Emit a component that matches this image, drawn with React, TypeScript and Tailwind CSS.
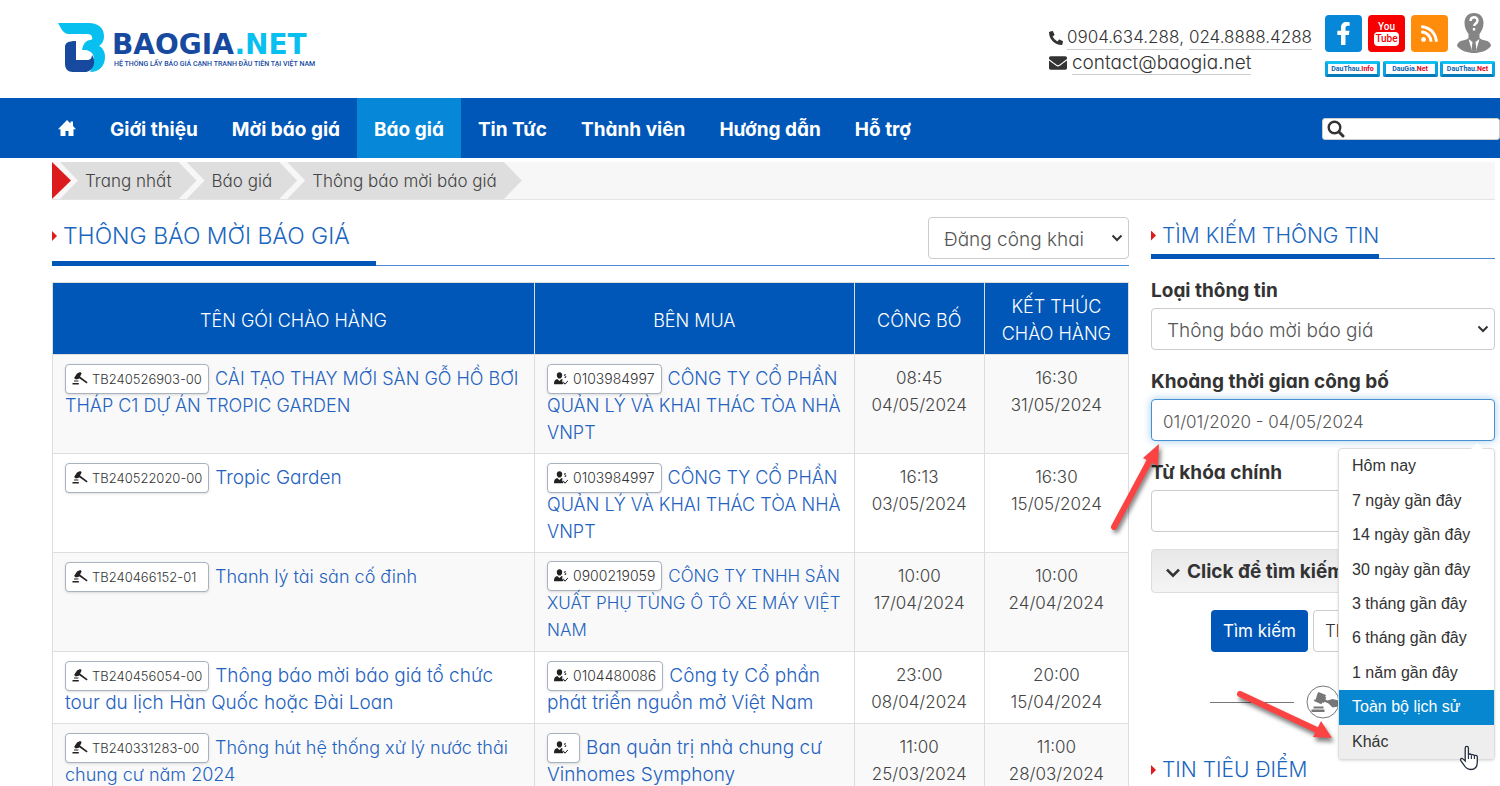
import { FaEnvelope, FaFacebookF, FaPhoneAlt, FaRss } from "react-icons/fa";

const NAV = ["Giới thiệu", "Mời báo giá", "Báo giá", "Tin Tức", "Thành viên", "Hướng dẫn", "Hỗ trợ"];
const CRUMBS = ["Trang nhất", "Báo giá", "Thông báo mời báo giá"];
const PARTNERS = [
  { name: "DauThau.", suffix: "Info" },
  { name: "DauGia.", suffix: "Net" },
  { name: "DauThau.", suffix: "Net" },
];
const RANGES = [
  "Hôm nay",
  "7 ngày gần đây",
  "14 ngày gần đây",
  "30 ngày gần đây",
  "3 tháng gần đây",
  "6 tháng gần đây",
  "1 năm gần đây",
  "Toàn bộ lịch sử",
  "Khác",
];

const SIZES = { sm: "text-[17px]", md: "text-[18px]", lg: "text-[19px]" };
type Size = keyof typeof SIZES;

type Row = {
  code: string;
  title: string;
  titleSize: Size;
  buyerCode: string;
  buyer: string;
  buyerSize: Size;
  published: [string, string];
  closes: [string, string];
};

const ROWS: Row[] = [
  {
    code: "TB240526903-00",
    title: "CẢI TẠO THAY MỚI SÀN GỖ HỒ BƠI THÁP C1 DỰ ÁN TROPIC GARDEN",
    titleSize: "md",
    buyerCode: "0103984997",
    buyer: "CÔNG TY CỔ PHẦN QUẢN LÝ VÀ KHAI THÁC TÒA NHÀ VNPT",
    buyerSize: "md",
    published: ["08:45", "04/05/2024"],
    closes: ["16:30", "31/05/2024"],
  },
  {
    code: "TB240522020-00",
    title: "Tropic Garden",
    titleSize: "lg",
    buyerCode: "0103984997",
    buyer: "CÔNG TY CỔ PHẦN QUẢN LÝ VÀ KHAI THÁC TÒA NHÀ VNPT",
    buyerSize: "md",
    published: ["16:13", "03/05/2024"],
    closes: ["16:30", "15/05/2024"],
  },
  {
    code: "TB240466152-01",
    title: "Thanh lý tài sản cố đinh",
    titleSize: "md",
    buyerCode: "0900219059",
    buyer: "CÔNG TY TNHH SẢN XUẤT PHỤ TÙNG Ô TÔ XE MÁY VIỆT NAM",
    buyerSize: "sm",
    published: ["10:00", "17/04/2024"],
    closes: ["10:00", "24/04/2024"],
  },
  {
    code: "TB240456054-00",
    title: "Thông báo mời báo giá tổ chức tour du lịch Hàn Quốc hoặc Đài Loan",
    titleSize: "lg",
    buyerCode: "0104480086",
    buyer: "Công ty Cổ phần phát triển nguồn mở Việt Nam",
    buyerSize: "lg",
    published: ["23:00", "08/04/2024"],
    closes: ["20:00", "15/04/2024"],
  },
  {
    code: "TB240331283-00",
    title: "Thông hút hệ thống xử lý nước thải chung cư năm 2024",
    titleSize: "md",
    buyerCode: "",
    buyer: "Ban quản trị nhà chung cư Vinhomes Symphony",
    buyerSize: "lg",
    published: ["11:00", "25/03/2024"],
    closes: ["11:00", "28/03/2024"],
  },
];

function GavelIcon() {
  return (
    <svg viewBox="0 0 16 14" className="inline h-[14px] w-4 align-[-2px]" fill="#222" aria-hidden="true">
      <path d="M5 1.500 8.200 0l1.500 1.200-2.700 5.600-3.200.6-1.700-1.400z" />
      <path d="m7 3.800 8.600 6.400-.9 1.300-8.500-6z" />
      <path d="M2 8.600h4.400v1H2zM.5 11h6.300v1.400H.5z" />
    </svg>
  );
}

function BuyerIcon() {
  return (
    <svg viewBox="0 0 14 14" className="inline h-[14px] w-[14px] align-[-2px]" fill="#222" aria-hidden="true">
      <path d="M5.500.200c2 0 2.900 1.300 2.700 3.200C8 5.400 7 6.600 5.500 6.600S3 5.400 2.800 3.400C2.600 1.500 3.500.200 5.500.200z" />
      <path d="M0 12.300c0-3 .6-4.600 3.200-5.200l2.200 2 2.200-2 1.200.6-1 1.500 1.700 2.300-1 .8z" />
      <path d="m9 9.600 2 2.600 3-3.400M11.600 2.500c-1.600-.4-1.700 1.300-.4 1.500 1.400.3 1.200 2-.6 1.500" fill="none" stroke="#222" strokeWidth="1" />
    </svg>
  );
}

const BADGE =
  "-my-2 mr-[6px] inline-block h-[30px] rounded-[4px] border border-[#a9b3bf] bg-white px-[6px] align-[1px] leading-[28px] whitespace-nowrap text-[#333] shadow-sm";

function CodeBadge({ code }: { code: string }) {
  return (
    <a href="#" className={BADGE + " min-w-[144px] text-[13px]"}>
      <GavelIcon />
      <span className="ml-1">{code}</span>
    </a>
  );
}

function BuyerBadge({ code }: { code: string }) {
  return (
    <a href="#" className={BADGE + " min-w-[33px] text-[14px]"}>
      <BuyerIcon />
      <span className="ml-[5px]">{code}</span>
    </a>
  );
}

function Logo() {
  return (
    <a href="#" className="flex items-start" aria-label="BaoGia.Net">
      <svg viewBox="0 0 48 52" className="h-[52px] w-12" aria-hidden="true">
        <path d="M0 1h31c9 0 15 5 15 13 0 5-2 8-5 10 4 2 6 6 6 11 0 9-6 15-15 15 2-4 4-8 4-13 0-5-3-8-8-9h-4c1-4 2-9 8-10 2 0 3-1 2-3 0-2-2-3-5-3H11C5 12 3 6 0 1z" fill="#08c0f0" />
        <path d="M7 25c0-4 3-6 11-6v19h11c3 0 5-2 5-5 5 7 1 17-7 17H15c-5 0-8-3-8-8z" fill="#174a9f" />
      </svg>
      <span className="ml-[6px] block pt-[9px]">
        <span className="block font-['DejaVu_Sans',sans-serif] text-[28px] leading-[28px] font-bold text-[#174a9f]">
          BAOGIA<span className="text-[#08c0f0]">.NET</span>
        </span>
        <span className="block pl-[2px] font-['Roboto',sans-serif] text-[7px] leading-[10px] font-medium whitespace-nowrap text-[#174a9f]">
          HỆ THỐNG LẤY BÁO GIÁ CẠNH TRANH ĐẦU TIÊN TẠI VIỆT NAM
        </span>
      </span>
    </a>
  );
}

function AvatarIcon() {
  return (
    <svg viewBox="0 0 36 40" className="h-10 w-9" aria-hidden="true">
      <path d="M18 0c6 0 9.500 4 9.500 10 0 5-2 8-4 11v4c2 2 5 2 8 3 2 1 3.500 3 3.500 5-4 5-11 7-17 7S5 38 1 33c0-2 1.500-4 3.500-5 3-1 6-1 8-3v-4c-2-3-4-6-4-11C8.500 4 12 0 18 0z" fill="#858585" />
      <path d="m12.500 26 3.500 12h4l3.500-12-4 3h-3z" fill="#fff" />
      <path d="m16.500 29-1 8 2.500 2 2.500-2-1-8z" fill="#858585" />
      <path d="M14.500 8c0-5 7-5 7-.5 0 3-3.300 3-3.300 5.500M18 15v2.500" fill="none" stroke="#fff" strokeWidth="2.400" />
    </svg>
  );
}

function HomeIcon() {
  return (
    <svg viewBox="0 0 18 16" className="h-4 w-[18px]" fill="#fff" aria-hidden="true">
      <path d="M9 0l3.500 3.500V1.500H15V6l3 3.200h-2.500V16h-5v-5h-3v5h-5V9.200H0z" />
    </svg>
  );
}

function SearchIcon() {
  return (
    <svg viewBox="0 0 18 18" className="h-[18px] w-[18px] shrink-0" fill="none" stroke="#333" aria-hidden="true">
      <circle cx="7.500" cy="7.500" r="5.800" strokeWidth="2.400" />
      <path d="m12 12 4 4" strokeWidth="3" strokeLinecap="round" />
    </svg>
  );
}

function Chevron({ className }: { className: string }) {
  return (
    <svg viewBox="0 0 12 8" className={className} fill="none" stroke="currentColor" strokeWidth="2" aria-hidden="true">
      <path d="m1.500 1.500 4.500 4.500 4.500-4.500" />
    </svg>
  );
}

function Select({ id, value, label }: { id: string; value: string; label?: string }) {
  return (
    <div className="relative">
      <select
        id={id}
        aria-label={label}
        className="h-[42px] w-full appearance-none rounded-[4px] border border-[#ccc] bg-white pt-[5px] pl-[15px] text-[19px] font-light text-[#555]"
      >
        <option>{value}</option>
      </select>
      <Chevron className="pointer-events-none absolute top-[17px] right-[6px] h-2 w-3 text-[#333]" />
    </div>
  );
}

function RedMark() {
  return <span className="mr-[6px] h-[10px] w-[5px] shrink-0 bg-[#e01b1b] [clip-path:polygon(0_0,100%_50%,0_100%)]" />;
}

function RangeMenu() {
  return (
    <div className="absolute top-[49px] right-0 z-10 w-[157px]">
      <ul className="grid h-[312px] auto-rows-fr overflow-hidden rounded-[4px] border border-[#ddd] bg-white font-['Liberation_Sans',Arial,sans-serif] text-[16px] text-[#333] shadow-sm">
        {RANGES.map((r) => (
          <li key={r} className={r === "Toàn bộ lịch sử" ? "flex bg-[#0787cf] text-white" : r === "Khác" ? "flex bg-[#eee]" : "flex"}>
            <button type="button" className="w-full px-[13px] text-left">
              {r}
            </button>
          </li>
        ))}
      </ul>
      <span className="absolute -top-[5px] right-3 h-[6px] w-3 bg-white [clip-path:polygon(50%_0,100%_100%,0_100%)]" />
      <svg viewBox="0 0 20 26" className="absolute right-4 bottom-[-11px] h-[26px] w-5" aria-hidden="true">
        <path
          d="M6.200 16V3.200c0-2.400 3.200-2.400 3.200 0V10c.2-1.400 2.900-1.400 3 .4.400-1.300 2.900-1.100 3 .6.500-1.100 2.900-.9 2.900 1v5c0 4.500-2 7.500-6.500 7.500-4 0-5.500-2-7-4.700L1.800 15.600c-.9-1.800 1-2.900 2.400-1.500z"
          fill="#fff"
          stroke="#222c3c"
          strokeWidth="1.300"
        />
        <path d="M9.400 10v4M12.400 10.500V14M15.400 11v3" stroke="#222c3c" strokeWidth="1.100" />
      </svg>
    </div>
  );
}

const LABEL = "mt-[18px] mb-1 block text-[19px] leading-[27px] font-bold text-[#333]";
const CELL = "border border-[#ddd] px-3 pt-[10px] pb-[7px] align-top leading-[27px]";
const HEAD = "border border-[#ddd] pt-[10px] pb-[7px] text-[18px] leading-[27px] font-light text-white";

export default function App() {
  return (
    <div className="min-h-screen bg-white font-['Inter',sans-serif] font-light text-[#333] [font-feature-settings:'cv11']">
      <header className="flex h-[98px] items-start justify-between pr-[5px] pl-[58px]">
        <div className="pt-[22px]">
          <Logo />
        </div>
        <div className="flex">
          <div className="mr-[13px] pt-[24px] leading-[27px]">
            <p className="flex items-center text-[17px]">
              <FaPhoneAlt className="mr-1 size-[14px]" />
              <a href="#" className="border-b border-[#ccc] leading-[23px]">0904.634.288</a>,&nbsp;
              <a href="#" className="border-b border-[#ccc] leading-[23px]">024.8888.4288</a>
            </p>
            <p className="flex items-center text-[19px]">
              <FaEnvelope className="mr-[5px] size-[18px]" />
              <a href="#" className="border-b border-[#ccc] leading-[23px]">contact@baogia.net</a>
            </p>
          </div>
          <div className="w-[170px] pt-[13px]">
            <div className="flex h-10 items-center gap-[6px]">
              <a href="#" aria-label="Facebook" className="flex size-[37px] items-center justify-center rounded-[4px] bg-[#0787d7] text-white">
                <FaFacebookF className="size-[23px]" />
              </a>
              <a
                href="#"
                aria-label="YouTube"
                className="flex size-[37px] flex-col items-center justify-center rounded-[4px] bg-[#f60002] font-['Liberation_Sans_Narrow','Roboto',sans-serif] text-[10px] leading-[11px] font-medium text-white"
              >
                You
                <span className="rounded-[4px] bg-white px-[1px] leading-[14px] text-[#f60002]">Tube</span>
              </a>
              <a href="#" aria-label="RSS" className="flex size-[37px] items-center justify-center rounded-[4px] bg-[#ff8c0a] text-white">
                <FaRss className="size-[19px]" />
              </a>
              <a href="#" aria-label="Tài khoản" className="ml-[2px]">
                <AvatarIcon />
              </a>
            </div>
            <div className="mt-2 flex justify-between">
              {PARTNERS.map((p) => (
                <a
                  key={p.name + p.suffix}
                  href="#"
                  className="flex h-4 w-[55px] items-center justify-center rounded-[2px] border-[3px] border-t-[#12c2f2] border-r-[#08a5e4] border-b-[#0779b8] border-l-[#08a5e4] bg-white font-['Roboto',sans-serif] text-[7px] leading-none font-bold text-[#0d64b0]"
                >
                  {p.name}
                  <span className="text-[#e3001b]">{p.suffix}</span>
                </a>
              ))}
            </div>
          </div>
        </div>
      </header>

      <nav className="flex h-[60px] items-center justify-between bg-[#0057b8]">
        <ul className="flex h-full pl-[41px] text-[19px] font-bold text-white">
          <li>
            <a href="#" aria-label="Trang nhất" className="flex h-full items-center px-[17px]">
              <HomeIcon />
            </a>
          </li>
          {NAV.map((n) => (
            <li key={n} className={n === "Báo giá" ? "bg-[#0787d7]" : ""}>
              <a href="#" className="flex h-full items-center px-[17px] pt-1">
                {n}
              </a>
            </li>
          ))}
        </ul>
        <label className="mt-[2px] flex h-[22px] w-[178px] items-center rounded-[3px] border border-[#ccc] bg-white pl-1">
          <SearchIcon />
          <input type="search" aria-label="Tìm kiếm" className="w-full min-w-0 outline-none" />
        </label>
      </nav>

      <div className="pt-1 pr-[5px] pl-[52px]">
        <ol className="flex h-[38px] border-b border-[#e4e4e4] bg-[#f7f7f7] text-[17px] text-[#444]">
          <li className="mr-[-1px] w-[19px] bg-[#dc1c1c] [clip-path:polygon(0_0,100%_50%,0_100%)]" />
          {CRUMBS.map((c) => (
            <li
              key={c}
              className="-ml-[10px] flex bg-[#dedede] [clip-path:polygon(0_0,calc(100%_-_18px)_0,100%_50%,calc(100%_-_18px)_100%,0_100%,18px_50%)]"
            >
              <a href="#" className="flex items-center px-[25px] pt-[3px]">
                {c}
              </a>
            </li>
          ))}
        </ol>

        <div className="flex gap-[22px]">
          <main className="min-w-0 flex-1">
            <div className="mt-[17px] flex h-[49px] items-start justify-between border-b border-[#4a88d2]">
              <h1 className="flex h-[49px] items-center border-b-[5px] border-[#0057b8] pr-[26px] pb-[6px] text-[23px] font-light text-[#1a66be]">
                <RedMark />
                THÔNG BÁO MỜI BÁO GIÁ
              </h1>
              <div className="w-[201px]">
                <Select id="visibility" value="Đăng công khai" label="Hình thức đăng" />
              </div>
            </div>

            <table className="mt-4 w-full table-fixed border-collapse">
              <colgroup>
                <col className="w-[44.8%]" />
                <col className="w-[29.7%]" />
                <col className="w-[12.1%]" />
                <col className="w-[13.4%]" />
              </colgroup>
              <thead className="bg-[#0057b8]">
                <tr>
                  <th className={HEAD}>TÊN GÓI CHÀO HÀNG</th>
                  <th className={HEAD}>BÊN MUA</th>
                  <th className={HEAD}>CÔNG BỐ</th>
                  <th className={HEAD}>
                    KẾT THÚC
                    <br />
                    CHÀO HÀNG
                  </th>
                </tr>
              </thead>
              <tbody>
                {ROWS.map((r) => (
                  <tr key={r.code} className="odd:bg-[#f9f9f9]">
                    <td className={CELL + " " + SIZES[r.titleSize]}>
                      <CodeBadge code={r.code} />
                      <a href="#" className="text-[#2462c0]">
                        {r.title}
                      </a>
                    </td>
                    <td className={CELL + " " + SIZES[r.buyerSize]}>
                      <BuyerBadge code={r.buyerCode} />
                      <a href="#" className="text-[#2462c0]">
                        {r.buyer}
                      </a>
                    </td>
                    <td className={CELL + " text-center text-[17px] text-[#444]"}>
                      {r.published[0]}
                      <br />
                      {r.published[1]}
                    </td>
                    <td className={CELL + " text-center text-[17px] text-[#444]"}>
                      {r.closes[0]}
                      <br />
                      {r.closes[1]}
                    </td>
                  </tr>
                ))}
              </tbody>
            </table>
          </main>

          <aside className="relative w-[344px] shrink-0">
            <div className="mt-[17px] flex h-[42px] border-b border-[#4a88d2]">
              <h2 className="flex h-[42px] items-center border-b-[5px] border-[#0057b8] text-[21px] font-light text-[#1a66be]">
                <RedMark />
                TÌM KIẾM THÔNG TIN
              </h2>
            </div>

            <form>
              <label htmlFor="kind" className={LABEL}>
                Loại thông tin
              </label>
              <Select id="kind" value="Thông báo mời báo giá" />

              <label htmlFor="range" className={LABEL}>
                Khoảng thời gian công bố
              </label>
              <div className="relative">
                <input
                  id="range"
                  defaultValue="01/01/2020 - 04/05/2024"
                  className="block h-[42px] w-full rounded-[4px] border border-[#4a90d0] bg-white px-[11px] pt-[3px] text-[17px] text-[#555] shadow-[0_0_8px_rgba(102,175,233,0.6)] outline-none"
                />
                <RangeMenu />
              </div>

              <label htmlFor="keyword" className={LABEL}>
                Từ khóa chính
              </label>
              <input id="keyword" className="block h-[42px] w-full rounded-[4px] border border-[#ccc] px-[11px] outline-none" />

              <button
                type="button"
                className="mt-[17px] flex h-[44px] w-full items-center rounded-[4px] border border-[#ddd] bg-linear-to-b from-[#e8e8e8] to-[#f5f5f5] pt-[3px] pl-[13px] text-[19px] font-bold whitespace-nowrap"
              >
                <Chevron className="mr-[6px] h-3 w-4" />
                Click để tìm kiếm nâng cao
              </button>

              <div className="mt-[17px] flex justify-center gap-[5px] text-[17px]">
                <button type="submit" className="h-[42px] w-[97px] rounded-[4px] bg-[#0057b8] pt-[2px] font-normal text-white">
                  Tìm kiếm
                </button>
                <button type="reset" className="h-[42px] w-[122px] rounded-[4px] border border-[#ccc] bg-white pt-[2px] pl-[11px] text-left whitespace-nowrap">
                  Thiết lập lại
                </button>
              </div>
            </form>

            <div className="mt-[33px] flex items-center justify-center gap-3">
              <span className="h-px w-[84px] bg-[#777]" />
              <svg viewBox="0 0 34 34" className="size-[34px]" aria-hidden="true">
                <circle cx="17" cy="17" r="16" fill="#fff" stroke="#777" />
                <path d="m11.500 8.500 1-1.500 7.500 3-.8 1.700 1 .8-2.400 5.500-1.600-.4-.8 1.700-7.500-3.300.8-1.700 1 .3zM18.500 14l3 1.500 5-1.500 6 1.500v6l-6 1-4-4-4.500-2zM7.500 21.500h10v2h-10zM5.500 24.500h13V27h-13z" fill="#777" />
              </svg>
              <span className="h-px w-[84px] bg-[#777]" />
            </div>

            <h2 className="mt-[34px] flex items-center text-[21px] leading-[34px] font-light text-[#1a66be]">
              <RedMark />
              TIN TIÊU ĐIỂM
            </h2>

            <svg viewBox="0 0 60 100" className="pointer-events-none absolute top-[238px] left-[-45px] z-20 h-[100px] w-[60px] drop-shadow-[2px_3px_2px_rgba(0,0,0,0.5)]" aria-hidden="true">
              <path d="M8 89 44 22" stroke="#fb4343" strokeWidth="6" strokeLinecap="round" />
              <path d="M53 6 37 20l15 8z" fill="#fb4343" />
            </svg>
            <svg viewBox="0 0 110 60" className="pointer-events-none absolute top-[486px] left-[80px] z-20 h-[60px] w-[110px] drop-shadow-[2px_4px_2px_rgba(0,0,0,0.5)]" aria-hidden="true">
              <path d="M9 8 88 45" stroke="#fb4343" strokeWidth="6" strokeLinecap="round" />
              <path d="M101 52 90 35 82 51z" fill="#fb4343" />
            </svg>
          </aside>
        </div>
      </div>
    </div>
  );
}
